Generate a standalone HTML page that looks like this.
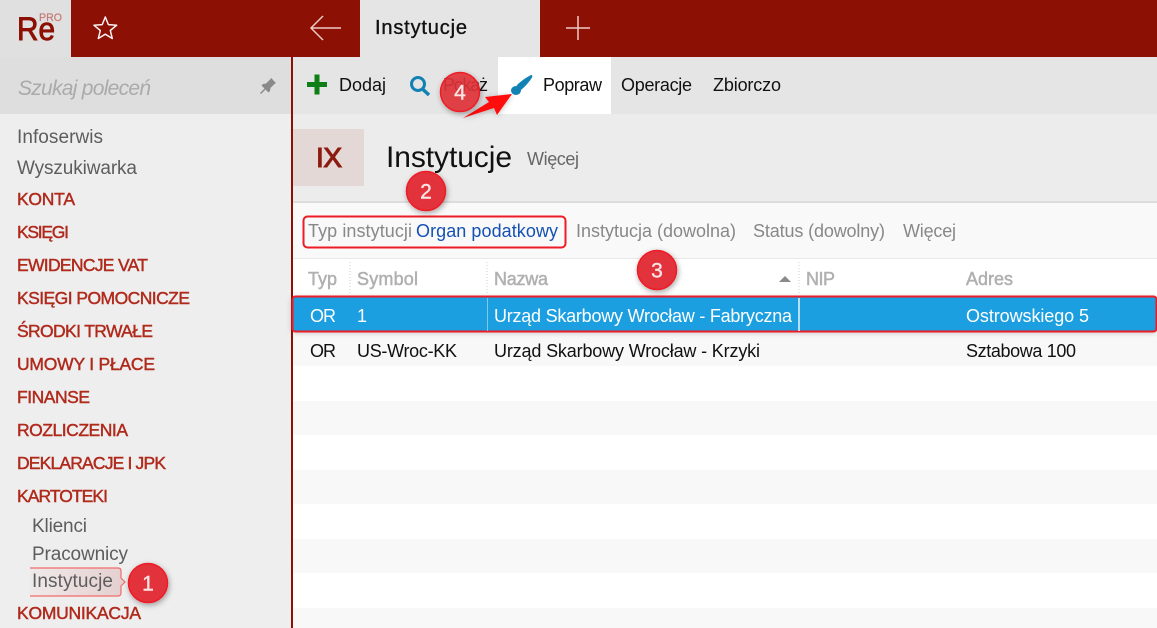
<!DOCTYPE html>
<html><head><meta charset="utf-8"><title>Instytucje</title>
<style>
html,body{margin:0;padding:0;width:1157px;height:628px;overflow:hidden;background:#fff}
svg{display:block;position:absolute;left:0;top:0}
text{font-family:"Liberation Sans",sans-serif;white-space:pre}
.m{font-size:17.500px;fill:#b02a1c;stroke:#b02a1c;stroke-width:.45}
.s{font-size:19px;fill:#5d5d5d}
.t{font-size:18px;fill:#111}
.f{font-size:18px;fill:#888}
.h{font-size:18px;fill:#b0b0b0;stroke:#b0b0b0;stroke-width:.5}
.d{font-size:18px;fill:#111}
.w{font-size:18px;fill:#fff}
.n{font-size:21px;fill:#fbe4e4;stroke:#fbe4e4;stroke-width:.4;text-anchor:middle}
</style></head><body>
<svg width="1157" height="628" viewBox="0 0 1157 628" xmlns="http://www.w3.org/2000/svg">
<defs>
<filter id="sh" x="-40%" y="-40%" width="180%" height="180%"><feDropShadow dx="1" dy="2" stdDeviation="3" flood-color="#000" flood-opacity=".35"/></filter>
<filter id="ss" x="-10%" y="-40%" width="120%" height="180%"><feDropShadow dx="0" dy="1" stdDeviation="3" flood-color="#000" flood-opacity=".25"/></filter>
<linearGradient id="ig" x1="0" x2="1" y1="0" y2="0"><stop offset="0" stop-color="#eecccc" stop-opacity=".1"/><stop offset="1" stop-color="#e3cfcf"/></linearGradient>
</defs>

<rect width="1157" height="628" fill="#fff"/>
<!-- sidebar -->
<rect x="0" y="57" width="291" height="571" fill="#eeeeee"/>
<rect x="0" y="57" width="291" height="57" fill="#dedede"/>
<rect x="291" y="57" width="2" height="571" fill="#8c1003"/>
<!-- header -->
<rect x="0" y="0" width="1157" height="57" fill="#8c1003"/>
<rect x="0" y="0" width="71" height="57" fill="#e0e0e0"/>
<rect x="360" y="0" width="180" height="57" fill="#e5e5e5"/>
<!-- toolbar -->
<rect x="293" y="57" width="864" height="57" fill="#e5e5e5"/>
<rect x="498" y="57" width="113" height="57" fill="#fff"/>
<!-- page title -->
<rect x="293" y="114" width="864" height="88" fill="#ececec"/>
<rect x="293" y="129" width="71" height="57" fill="#e3d8d6"/>
<rect x="293" y="201" width="864" height="2" fill="#dcdcdc"/>
<rect x="293" y="203" width="864" height="55" fill="#f9f9f9"/>
<rect x="293" y="258" width="864" height="1" fill="#e8e8e8"/>
<!-- stripes -->
<rect x="293" y="332" width="864" height="34" fill="#f8f8f8"/>
<rect x="293" y="401" width="864" height="34" fill="#f8f8f8"/>
<rect x="293" y="470" width="864" height="34" fill="#f8f8f8"/>
<rect x="293" y="539" width="864" height="34" fill="#f8f8f8"/>
<rect x="293" y="608" width="864" height="20" fill="#f8f8f8"/>

<!-- logo -->
<text x="17" y="40" font-size="32" fill="#8c1003" stroke="#8c1003" stroke-width=".9" textLength="38" lengthAdjust="spacingAndGlyphs">Re</text>
<text x="39" y="21" font-size="11" fill="#c57a72" stroke="#c57a72" stroke-width=".2" textLength="23" lengthAdjust="spacingAndGlyphs">PRO</text>
<!-- star -->
<path d="M105.300 17 L108.400 24.600 L116.700 25.200 L110.300 30.500 L112.300 38.500 L105.300 34.200 L98.300 38.500 L100.300 30.500 L93.900 25.200 L102.200 24.600 Z" fill="none" stroke="#fff" stroke-width="1.500" stroke-linejoin="round" opacity=".95"/>
<!-- back arrow -->
<path d="M341 28 H311 M323 16 L311 28 L323 40" fill="none" stroke="#eec9c4" stroke-width="1.500"/>
<!-- plus -->
<path d="M578 16 V40 M566 28 H590" fill="none" stroke="#eec9c4" stroke-width="1.500"/>
<text x="375" y="34" font-size="20" fill="#111" stroke="#111" stroke-width=".35" textLength="92">Instytucje</text>

<text x="18" y="95" font-size="21" font-style="italic" fill="#aaa" textLength="133">Szukaj poleceń</text>
<!-- pin -->
<path d="M273 80 L276 83 L274.500 84 L270.500 88 L270 91 L268.500 92.500 L265.500 89.500 L261 94 L260 93 L264.500 88.500 L261.500 85.500 L263 84 L266 83.500 L270 79.500 L271.500 78 Z" fill="#8a8a8a"/>

<!-- sidebar text -->
<text class="s" x="17" y="143" textLength="86">Infoserwis</text>
<text class="s" x="17" y="174" textLength="120">Wyszukiwarka</text>
<text class="m" x="17" y="205" textLength="58">KONTA</text>
<text class="m" x="17" y="238" textLength="52">KSIĘGI</text>
<text class="m" x="17" y="271" textLength="131">EWIDENCJE VAT</text>
<text class="m" x="17" y="304" textLength="173">KSIĘGI POMOCNICZE</text>
<text class="m" x="17" y="337" textLength="136">ŚRODKI TRWAŁE</text>
<text class="m" x="17" y="370" textLength="138">UMOWY I PŁACE</text>
<text class="m" x="17" y="403" textLength="73">FINANSE</text>
<text class="m" x="17" y="436" textLength="111">ROZLICZENIA</text>
<text class="m" x="17" y="469" textLength="149">DEKLARACJE I JPK</text>
<text class="m" x="17" y="502" textLength="91">KARTOTEKI</text>
<text class="s" x="32" y="532" textLength="55">Klienci</text>
<text class="s" x="32" y="560" textLength="96">Pracownicy</text>
<path d="M30 568 H118 Q121 568 121 571 V578 L125 582 L121 586 V593 Q121 596 118 596 H30 Z" fill="url(#ig)"/>
<path d="M30 568 H118 Q121 568 121 571 V578 L125 582 L121 586 V593 Q121 596 118 596 H30" fill="none" stroke="#f36a6a" stroke-width="1.200"/>
<text class="s" x="32" y="587" textLength="81">Instytucje</text>
<text class="m" x="17" y="619" textLength="124">KOMUNIKACJA</text>

<!-- toolbar -->
<path d="M307 84.500 H327 M317 74.500 V94.500" stroke="#0e7f16" stroke-width="5" fill="none"/>
<text class="t" x="339" y="91" textLength="47">Dodaj</text>
<circle cx="418" cy="84" r="6.500" fill="none" stroke="#1282b5" stroke-width="3"/>
<path d="M422.500 89 L429 95" stroke="#1282b5" stroke-width="3.500"/>
<text class="t" x="443" y="91" textLength="45">Pokaż</text>
<!-- brush -->
<path d="M531 75 Q533 75 532 77.500 Q528 84 521 90 L516.500 85.500 Q523 79 531 75 Z" fill="#1282b5"/>
<ellipse cx="516" cy="90.500" rx="5" ry="4.500" fill="#1282b5"/>
<text class="t" x="543" y="91" textLength="59">Popraw</text>
<text class="t" x="621" y="91" textLength="71">Operacje</text>
<text class="t" x="713" y="91" textLength="68">Zbiorczo</text>

<!-- page title -->
<text x="316" y="167" font-size="28" fill="#8c1a10" stroke="#8c1a10" stroke-width="1.100" textLength="26">IX</text>
<text x="386" y="167" font-size="30" fill="#111" textLength="126">Instytucje</text>
<text x="527" y="165" font-size="18" fill="#666" textLength="52">Więcej</text>

<!-- filters -->
<text class="f" x="308" y="237" textLength="104">Typ instytucji</text>
<text x="416" y="237" font-size="18" fill="#1550b5" textLength="142">Organ podatkowy</text>
<text class="f" x="576" y="237" textLength="160">Instytucja (dowolna)</text>
<text class="f" x="753" y="237" textLength="132">Status (dowolny)</text>
<text class="f" x="903" y="237" textLength="53">Więcej</text>
<rect x="303.500" y="216.500" width="262" height="31" rx="4" fill="none" stroke="#ee1c25" stroke-width="2"/>

<!-- table head -->
<g stroke="#cfcfcf" stroke-dasharray="1 2" stroke-width="1">
<path d="M350 262 V295"/><path d="M487 262 V295"/><path d="M799 262 V295"/>
</g>
<text class="h" x="308" y="285" textLength="29">Typ</text>
<text class="h" x="357" y="285" textLength="61">Symbol</text>
<text class="h" x="494" y="285" textLength="54">Nazwa</text>
<path d="M779 282 L785 276 L791 282 Z" fill="#8a8a8a"/>
<text class="h" x="806" y="285" textLength="29">NIP</text>
<text class="h" x="966" y="285" textLength="47">Adres</text>

<!-- selected row -->
<rect x="292" y="296.500" width="864" height="35" rx="3" fill="#1b9fe0" filter="url(#ss)"/>
<rect x="292.500" y="296.500" width="864" height="35" rx="3" fill="#1b9fe0" stroke="#ee1c25" stroke-width="2"/>
<path d="M487.500 298 V331" stroke="#7ec8ee"/>
<path d="M799 298 V331" stroke="#e8f5fc" stroke-width="1.500"/>
<text class="w" x="310" y="322" textLength="26">OR</text>
<text class="w" x="357" y="322" textLength="9">1</text>
<text class="w" x="494" y="322" textLength="298">Urząd Skarbowy Wrocław - Fabryczna</text>
<text class="w" x="966" y="322" textLength="123">Ostrowskiego 5</text>

<text class="d" x="310" y="357" textLength="26">OR</text>
<text class="d" x="357" y="357" textLength="100">US-Wroc-KK</text>
<text class="d" x="494" y="357" textLength="266">Urząd Skarbowy Wrocław - Krzyki</text>
<text class="d" x="966" y="357" textLength="110">Sztabowa 100</text>

<!-- red arrow -->
<path d="M463 118 L489 102 L485 97 L512 94 L497 115 L494 108 Z" fill="#f11" filter="url(#ss)"/>

<!-- callouts -->
<g filter="url(#sh)">
<circle cx="148" cy="583" r="19.500" fill="#e2323a" stroke="#ee1c25" stroke-width="1.500"/>
<circle cx="426" cy="191" r="19.500" fill="#e2323a" stroke="#ee1c25" stroke-width="1.500"/>
<circle cx="657" cy="270" r="19.500" fill="#e2323a" stroke="#ee1c25" stroke-width="1.500"/>
<circle cx="460" cy="92" r="19.500" fill="#e2323a" fill-opacity=".88" stroke="#ee1c25" stroke-width="1.500"/>
</g>
<text class="n" x="148" y="590.500">1</text>
<text class="n" x="426" y="198.500">2</text>
<text class="n" x="657" y="277.500">3</text>
<text class="n" x="460" y="99.500">4</text>
</svg>
</body></html>
